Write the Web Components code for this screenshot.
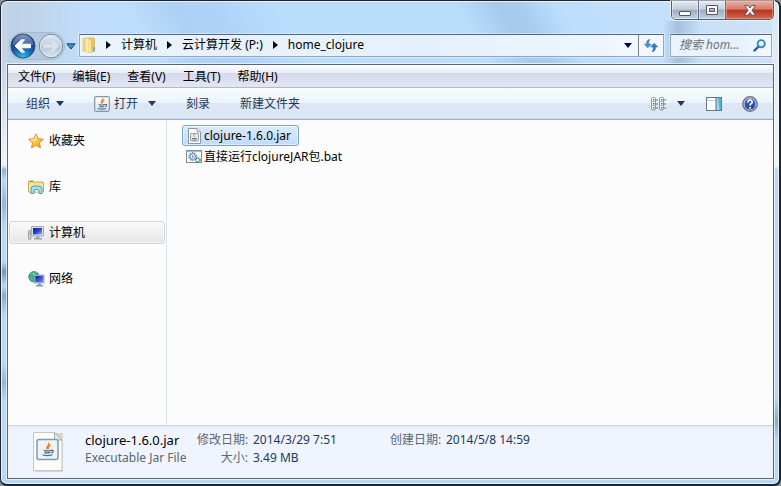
<!DOCTYPE html>
<html lang="zh-CN">
<head>
<meta charset="utf-8">
<title>home_clojure</title>
<style>
html, body { margin: 0; height: 100%; }
body { background: #8a8f98; font: 12px/18px "Noto Sans", "Noto Sans CJK SC", sans-serif; color: #000; overflow: hidden; }
</style>
</head>
<body>
<explorer-window></explorer-window>
<script>
const base = `<style>
:host, * { box-sizing: border-box; }
button, input, a { font: inherit; color: inherit; text-decoration: none; }
button { background: none; border: 0; padding: 0; margin: 0; display: flex; align-items: center; white-space: nowrap; }
</style>`;

function define(name, markup, setup) {
  customElements.define(name, class extends HTMLElement {
    constructor() {
      super();
      this.attachShadow({ mode: 'open' }).innerHTML = base + markup;
    }
    connectedCallback() { if (setup) setup(this, this.shadowRoot); }
  });
}

const javaCup = `
  <path d="M8.6 2.2C10.5 4 5.8 5 7.6 7.7M10.6 4C8.2 5 8 5.8 9 7.2" fill="none" stroke="#ee7b22" stroke-width="1.2"/>
  <path d="M4.6 8.5q3 1 6.4 0M5.2 10.4q2.6.9 5 0M11 8.5c2.4-.4 2.2 1.6 0 2.2M3.6 12.4q4.2 1.4 8.6 0" fill="none" stroke="#47708f" stroke-width="1.1"/>`;

const icons = {
  back: [26, 26, `<defs><radialGradient id="g" cx=".5" cy="1" r=".9"><stop stop-color="#35c4f4"/><stop offset=".45" stop-color="#1567b5"/><stop offset="1" stop-color="#122b73"/></radialGradient><linearGradient id="h" x2="0" y2="1"><stop stop-color="#d4e0f0"/><stop offset="1" stop-color="#6f94c8" stop-opacity=".7"/></linearGradient></defs>
    <circle cx="13" cy="13" r="12" fill="url(#g)" stroke="#314a70"/><path d="M2.5 12a10.5 10.5 0 0 1 21 0q-10 2-21 0z" fill="url(#h)" opacity=".6"/>
    <path d="M5 13l6.5-6.2h3L11 11.200h9.500v3.600H11l3.500 4.400h-3z" fill="#fff" stroke="#fff" stroke-linejoin="round"/>`],
  forward: [26, 26, `<defs><linearGradient id="g" x2="0" y2="1"><stop stop-color="#dce7f1"/><stop offset=".5" stop-color="#c3d1df"/><stop offset=".52" stop-color="#b4c5d5"/><stop offset="1" stop-color="#d7e5ef"/></linearGradient></defs>
    <circle cx="13" cy="13" r="11.700" fill="url(#g)" stroke="#76889d"/><circle cx="13" cy="13" r="10.600" fill="none" stroke="#e6eff7" opacity=".7"/>
    <path d="M21 13l-6.500-6.200h-3L15 11.200H5.500v3.600H15l-3.500 4.400h3z" fill="#dbe5ee" stroke="#c9d7e4" stroke-linejoin="round"/>`],
  recent: [10, 7, `<path d="M.8.8h8.400L5 6z" fill="#3a93ca" stroke="#164a78"/>`],
  down: [8, 5, `<path d="M0 0h8L4 5z" fill="currentColor"/>`],
  right: [5, 8, `<path d="M0 0l5 4-5 4z" fill="#000"/>`],
  folder: [14, 16, `<path d="M1 1.500l6-.8v14.600L1 14z" fill="#f3d77a" stroke="#e2bb52" stroke-width=".6"/><path d="M4 2l5-.8v14.400l-5-1z" fill="#fbeeb0"/><path d="M7 1h5.500v13.400L7 15.600z" fill="#e9c75b" stroke="#d4a93e" stroke-width=".5"/><path d="M7 2l2 1v12l-2 .6z" fill="#f8e69b"/><path d="M11 10h2v4l-2 .5z" fill="#5fb3e2"/>`],
  refresh: [14, 13, `<path d="M6 .5C3 .8 2.300 2.800 2.700 5.200H.300L3.800 8.800 7.300 5.200H4.900C4.500 3.200 4.700 1.600 6 .500z" fill="#3b95d4" stroke="#1f69ae" stroke-width=".5"/><path d="M8 12.600c3-.3 3.700-2.300 3.300-4.700h2.400L10.200 4.300 6.700 7.900h2.400c.4 2 .2 3.600-1.100 4.700z" fill="#2f80c6" stroke="#1c4d92" stroke-width=".5"/>`],
  search: [13, 13, `<path d="M1.500 11.500L6 7" stroke="#2d5799" stroke-width="2.400" stroke-linecap="round"/><circle cx="8.200" cy="4.700" r="3.600" fill="#ecf7fd" stroke="#2689c7" stroke-width="1.800"/>`],
  min: [12, 5, `<rect x=".5" y=".5" width="11" height="4" rx=".5" fill="#fff" stroke="#535666"/>`],
  max: [12, 10, `<path fill-rule="evenodd" d="M.5.500h11v9H.5zM3.500 3.500v3h5v-3z" fill="#fff" stroke="#535666"/>`],
  close: [12, 11, `<path d="M.7.600h3.500L6 3 7.800.600h3.500L8 5.300l3.500 4.900H7.900L6 7.600l-1.900 2.600H.500L4 5.300z" fill="#fff" stroke="#5c4651" stroke-width=".9"/>`],
  java: [16, 16, `<defs><linearGradient id="g" x2="0" y2="1"><stop stop-color="#fff"/><stop offset="1" stop-color="#d9e4ec"/></linearGradient></defs><rect x=".7" y=".7" width="14.600" height="14.600" rx="1.500" fill="url(#g)" stroke="#8297aa" stroke-width="1.200"/>${javaCup}`],
  views: [15, 14, [0, 8].map(x => `<rect x="${x + .5}" y=".5" width="4" height="12.500" rx="1" fill="#fff" stroke="#8296aa"/>` + [2, 6, 10].map((y, i) => `<path d="M${x + .5} ${y + 2.500}h4" stroke="#a9b7c4"/><rect x="${x + 2}" y="${y}" width="1.500" height="1.500" fill="${['#2a8e55', '#d22d22', '#2666b5'][i]}"/><path d="M${x + 5} ${y + 1}h2" stroke="#63758a"/>`).join('')).join('')],
  pane: [16, 14, `<rect x=".5" y=".5" width="15" height="13" fill="#fff" stroke="#61788d"/><path d="M1 3.500h9" stroke="#c6d2dc"/><path d="M10 1h5v12h-5z" fill="#9edbe9"/><path d="M12 1h3v12h-1.500z" fill="#5cb4d0"/><path d="M10 .5v13" stroke="#47758f"/>`],
  help: [16, 16, `<defs><linearGradient id="g" x2="0" y2="1"><stop stop-color="#5375cd"/><stop offset="1" stop-color="#1734a0"/></linearGradient></defs><circle cx="8" cy="8" r="7.200" fill="url(#g)" stroke="#6e7787" stroke-width="1.400"/><circle cx="8" cy="8" r="6" fill="none" stroke="#d0d7e5" stroke-width="1"/><path d="M5.800 6.400C5.800 3 10.700 3.600 10.200 6.300 9.900 7.700 8 7.800 8 9.600" fill="none" stroke="#fff" stroke-width="1.600"/><circle cx="8" cy="11.700" r="1" fill="#fff"/>`],
  star: [16, 16, `<defs><linearGradient id="g" x2="1" y2="1"><stop stop-color="#fff2a4"/><stop offset=".5" stop-color="#ffc94a"/><stop offset="1" stop-color="#f09018"/></linearGradient></defs><path d="M8 .8l2.100 4.800 5.200.7-3.900 3.500 1.100 5.100L8 12.300l-4.500 2.600 1.100-5.100L.700 6.300l5.200-.7z" fill="url(#g)" stroke="#e58a29" stroke-linejoin="round"/><path d="M8 2.500L7 7l-4 .2" stroke="#fff8cf" fill="none"/>`],
  library: [16, 14, `<path d="M.5 2q0-1 1-1h4l1 1h8q1 0 1 1v9H.5z" fill="#f3dc83" stroke="#c7a94d"/><path d="M1 4.500h14V12H1z" fill="#f9e9a5"/><path d="M2 1.500h3" stroke="#4aa253"/><path d="M3 13.500V9q0-3 3-3h5q3 0 3 3v4.500h-3V11q0-1.500-1.500-1.500h-2Q6 9.500 6 11v2.500z" fill="#a7dff4" stroke="#3f94bf" stroke-width=".9"/>`],
  computer: [16, 14, `<defs><linearGradient id="g" x2="1" y2="1"><stop stop-color="#101fae"/><stop offset=".5" stop-color="#2443d0"/><stop offset="1" stop-color="#9cb7f1"/></linearGradient></defs><rect x=".5" y="4.500" width="2.500" height="9" rx=".8" fill="#cbd1d5" stroke="#8d969d" stroke-width=".8"/><path d="M2 7v1" stroke="#37a23c"/><rect x="3.500" y=".5" width="12" height="9.500" rx=".5" fill="#dde1e5" stroke="#a0a8b0"/><rect x="5" y="2" width="9" height="6.500" fill="url(#g)"/><path d="M8 10.500h3.500v1.500H14v1.500H6V12h2z" fill="#9ba5ae"/>`],
  network: [17, 16, `<defs><linearGradient id="g" x2="1" y2="1"><stop stop-color="#08149b"/><stop offset="1" stop-color="#6b92ee"/></linearGradient></defs><circle cx="6" cy="5.800" r="5.300" fill="#2f9ee0" stroke="#257bae" stroke-width=".7"/><path d="M2 2.500Q5 0 8 1.500L5.500 4l-3 1zM1 6l3.500.5L5 10 3 9.500z" fill="#4cc64d"/><path d="M5 2.500Q7 3 7 5" stroke="#c3f1f4" fill="none"/><rect x="6.500" y="4" width="9.500" height="8" fill="#e1e7ed" stroke="#8c9ba9" stroke-width=".8"/><rect x="7.300" y="4.800" width="8" height="6.500" fill="url(#g)"/><path d="M10 12.500h3v1.500h2v1.500H8V14h2z" fill="#8497ab"/>`],
  jar: [13, 16, `<path d="M.5.500h8.500l3.500 3.500v11.500H.5z" fill="#fff" stroke="#8f9599"/><path d="M9 .5V4h3.500" fill="#e1e4e6" stroke="#9ca2a6"/><rect x="2.500" y="5.500" width="8" height="7.500" rx=".5" fill="#e5ebef" stroke="#92a4b1"/><path d="M6.700 6l-1 1.700 1 1.300" fill="none" stroke="#ee812b"/><path d="M4 10.500h5M4.500 12h4" stroke="#587f9c"/>`],
  bat: [16, 13, `<rect x=".5" y=".5" width="15" height="12" fill="#fbfdfe" stroke="#7d8c98"/><path d="M1 1.500h14" stroke="#adbbc6"/><circle cx="6.700" cy="6.500" r="3.500" fill="#dceaf4" stroke="#5c84a6" stroke-width="2" stroke-dasharray="1.200 1"/><circle cx="6.700" cy="6.500" r="2.700" fill="#eff7fb" stroke="#6d98ba"/><circle cx="6.700" cy="6.500" r="1" fill="#5584ab"/><circle cx="12" cy="10" r="2" fill="#fff" stroke="#41769e" stroke-width="1.600" stroke-dasharray="1.200 .5"/>`],
  bigjar: [32, 42, `<path d="M2 2h29v39H3z" fill="#c9c9c4" opacity=".7"/><path d="M1.500 1.500h21l7.500 7.500v30.500H1.500z" fill="#fbfbf7" stroke="#c6c8c5"/><path d="M22.500 1.500V9H30z" fill="#e6e7e6" stroke="#a8adac"/><rect x="5" y="8.500" width="21" height="20" rx="2" fill="#eef3f6" stroke="#8499ac" stroke-width="1.500"/><g transform="translate(6.500 9.500) scale(1.150)">${javaCup}</g>`]
};

define('win-icon', `<style>:host { display: inline-flex; flex: none; } svg { display: block; overflow: visible; }</style><span></span>`, (el, root) => {
  const [w, h, art] = icons[el.getAttribute('name')];
  root.querySelector('span').innerHTML = `<svg width="${w}" height="${h}" viewBox="0 0 ${w} ${h}" aria-hidden="true">${art}</svg>`;
});

define('caption-buttons', `<style>
:host { display: flex; height: 19px; border: 1px solid #515f73; border-top: 0; border-radius: 0 0 5px 5px; overflow: hidden; box-shadow: 0 0 0 1px #ffffff90; }
button { width: 27px; justify-content: center; border-right: 1px solid #5c6b80; background: linear-gradient(#e2ebf5, #c2cddb 46%, #9baabd 50%, #c2d3e5); box-shadow: inset 0 0 0 1px #ffffff70; }
.close { width: 47px; border: 0; background: linear-gradient(#e9b1a4, #d47a67 46%, #b83220 50%, #d26b48); box-shadow: inset 0 0 0 1px #f6c4b070; }
.min { padding-top: 6px; }
</style><button class="min" aria-label="最小化"><win-icon name="min"></win-icon></button><button aria-label="最大化"><win-icon name="max"></win-icon></button><button class="close" aria-label="关闭"><win-icon name="close"></win-icon></button>`);

define('address-row', `<style>
:host { display: flex; align-items: center; height: 26px; padding: 0 2px 0 2px; }
.nav { display: flex; align-items: center; gap: 2px; width: 69px; flex: none; padding-top: 2px; }
.pair { display: flex; gap: 2px; border-radius: 13px; background: #a9bdd080; box-shadow: 0 0 0 1px #7890ab60; }
.path, .search { height: 23px; background: linear-gradient(90deg, #eaf4fd, #e4f0fb 60%, #f2f8fe); border: 1px solid #94a8bd; border-top-color: #526880; box-shadow: 0 0 0 1px #ffffff60; display: flex; align-items: center; }
.path { flex: 1; min-width: 0; margin-right: 6px; padding-left: 2px; }
.sep { margin: 0 10px; }
.end { margin-left: auto; }
.go { height: 21px; width: 25px; margin-left: 6px; border-left: 1px solid #728599; justify-content: center; }
.drop { color: #000060; }
.search { width: 102px; flex: none; padding: 0 5px 0 8px; }
input { flex: 1; min-width: 0; border: 0; padding: 0; background: none; font-style: italic; outline: 0; }
input::placeholder { color: #6d7177; opacity: 1; }
</style>
<div class="nav"><div class="pair"><button aria-label="后退"><win-icon name="back"></win-icon></button><button aria-label="前进"><win-icon name="forward"></win-icon></button></div><button aria-label="最近浏览"><win-icon name="recent"></win-icon></button></div>
<div class="path"><win-icon name="folder"></win-icon>
<win-icon class="sep" name="right"></win-icon><button>计算机</button>
<win-icon class="sep" name="right"></win-icon><button>云计算开发 (P:)</button>
<win-icon class="sep" name="right"></win-icon><button>home_clojure</button>
<button class="end drop" aria-label="展开"><win-icon name="down"></win-icon></button><button class="go" aria-label="刷新"><win-icon name="refresh"></win-icon></button></div>
<div class="search"><input type="text" aria-label="搜索" placeholder="搜索 hom..."><win-icon name="search"></win-icon></div>`);

define('menu-bar', `<style>
:host { display: flex; align-items: center; gap: 17px; height: 23px; flex: none; padding: 1px 0 0 10px; border-bottom: 1px solid #b2b9cc; background: linear-gradient(#fff, #e9ecf6 36%, #d5daec 37%, #e2e6f4); }
</style><button>文件(F)</button><button>编辑(E)</button><button>查看(V)</button><button>工具(T)</button><button>帮助(H)</button>`);

define('tool-bar', `<style>
:host { display: flex; align-items: center; height: 32px; flex: none; padding: 0 15px 0 18px; color: #1e395b; border-bottom: 1px solid #a0afc3; background: linear-gradient(#fbfdff, #eaf3fc 48%, #dce6f4 50%, #dce7f5 94%, #c9d6e7); }
button { gap: 6px; margin-right: 30px; }
.open { gap: 4px; }
.open win-icon + span { margin-right: 6px; }
.right { display: flex; margin-left: auto; gap: 20px; }
.right button { margin: 0; }
.right .views { gap: 11px; margin-right: 1px; }
</style>
<button>组织<win-icon name="down"></win-icon></button>
<button class="open"><win-icon name="java"></win-icon><span>打开</span><win-icon name="down"></win-icon></button>
<button>刻录</button><button>新建文件夹</button>
<div class="right"><button class="views" aria-label="更改视图"><win-icon name="views"></win-icon><win-icon name="down"></win-icon></button><button aria-label="预览窗格"><win-icon name="pane"></win-icon></button><button aria-label="帮助"><win-icon name="help"></win-icon></button></div>`);

define('nav-item', `<style>
:host { display: block; }
a { display: flex; align-items: center; height: 23px; padding-left: 18px; border: 1px solid transparent; border-radius: 3px; }
.icon { width: 21px; display: flex; }
:host([selected]) a { border-color: #d5d5d5; background: linear-gradient(#fafafa, #e6e6e6); box-shadow: inset 0 0 0 1px #ffffff90; }
</style><a href="#"><span class="icon"><slot name="icon"></slot></span><slot></slot></a>`);

define('nav-pane', `<style>
:host { display: flex; flex-direction: column; gap: 23px; width: 159px; flex: none; padding: 9px 1px 0; border-right: 1px solid #d6e5f5; }
</style>
<nav-item><win-icon slot="icon" name="star"></win-icon>收藏夹</nav-item>
<nav-item><win-icon slot="icon" name="library"></win-icon>库</nav-item>
<nav-item selected><win-icon slot="icon" name="computer"></win-icon>计算机</nav-item>
<nav-item><win-icon slot="icon" name="network"></win-icon>网络</nav-item>`);

define('file-item', `<style>
:host { display: block; }
button { height: 21px; gap: 2px; padding: 0 7px 0 3px; border: 1px solid transparent; border-radius: 3px; }
.icon { width: 16px; display: flex; justify-content: center; }
:host([selected]) button { border-color: #7da2ce; background: linear-gradient(#dcebfc, #c1dbfc); box-shadow: inset 0 0 0 1px #ffffff70; }
</style><button><span class="icon"><slot name="icon"></slot></span><slot></slot></button>`);

define('file-list', `<style>
:host { display: flex; flex-direction: column; align-items: flex-start; flex: 1; padding: 5px 15px; }
</style>
<file-item selected><win-icon slot="icon" name="jar"></win-icon>clojure-1.6.0.jar</file-item>
<file-item><win-icon slot="icon" name="bat"></win-icon>直接运行clojureJAR包.bat</file-item>`);

define('details-pane', `<style>
:host { display: flex; flex: none; height: 53px; padding: 5px 24px; border-top: 1px solid #c5d3e5; background: linear-gradient(#e4ecf7, #f0f4fc 5px, #eff3fb); color: #1e395b; }
.grid { display: grid; grid-template-columns: 112px 51px 142px 51px auto; grid-auto-rows: 18px; margin-left: 21px; white-space: nowrap; }
.name { color: #000; font-size: 13px; }
.label { color: #5a6779; text-align: right; }
.value { padding-left: 5px; }
.type { color: #5a6779; }
</style>
<win-icon name="bigjar"></win-icon>
<div class="grid"><span class="name">clojure-1.6.0.jar</span><span class="label">修改日期:</span><span class="value">2014/3/29 7:51</span><span class="label">创建日期:</span><span class="value">2014/5/8 14:59</span>
<span class="type">Executable Jar File</span><span class="label">大小:</span><span class="value">3.49 MB</span></div>`);

define('explorer-window', `<style>
:host { display: flex; flex-direction: column; height: 100vh; padding: 0 5px 5px 7px; border: 1px solid #20232d; border-width: 1px 2px 2px 1px; border-radius: 7px; box-shadow: inset 0 0 0 1px #ffffffb0;
  background:
    linear-gradient(#c5d5e8 13%, #eef3fb 34%, #8fb0d2 35%, transparent 37%, #5f7f9e60 42%, transparent 47%, transparent 54%, #4f6f8ea0 56%, transparent 59%, #5f7f9e80 61%, transparent 65%, transparent 75%, #7d9abc90 79%, transparent 83%) 0 0 / 7px 100% no-repeat,
    linear-gradient(#d7e6f7 0, #eef5fc 34%, transparent 35%, transparent 82%, #599a9fa0 87%, transparent 91%) 100% 0 / 7px 100% no-repeat,
    linear-gradient(90deg, transparent 85%, #7fa0c280 87%, #d5e3f300 90%) 0 20px / 100% 44px no-repeat,
    linear-gradient(90deg, #b9cbdfc0, #bfd3e8a0 6%, #bedcfb00 10%, transparent 82%, #d0e1f4) 0 0 / 100% 64px no-repeat,
    linear-gradient(60deg, #c4dcf5 0, #bedcfb 16%, #bedcfb 20%, #add1f5 25%, #b0d3f8 31%, #bbddfc 38%, #bbddfc 60%, #a8cbed 65%, #aacdef 68%, #bbddfc 72%, #c1dffb 78%, #c5e0fb) 0 0 / 100% 64px no-repeat, #b8d8f8; }
.caption { display: flex; justify-content: flex-end; height: 31px; flex: none; }
.client { flex: 1; display: flex; flex-direction: column; min-height: 0; margin: 6px 0 0 -1px; border: 1px solid #53677f; background: #fcfcfc; box-shadow: 0 0 0 1px #ffffffa0; }
.body { flex: 1; display: flex; min-height: 0; }
</style>
<div class="caption"><caption-buttons></caption-buttons></div>
<address-row></address-row>
<div class="client"><menu-bar></menu-bar><tool-bar></tool-bar><div class="body"><nav-pane></nav-pane><file-list></file-list></div><details-pane></details-pane></div>`);
</script>
</body>
</html>
